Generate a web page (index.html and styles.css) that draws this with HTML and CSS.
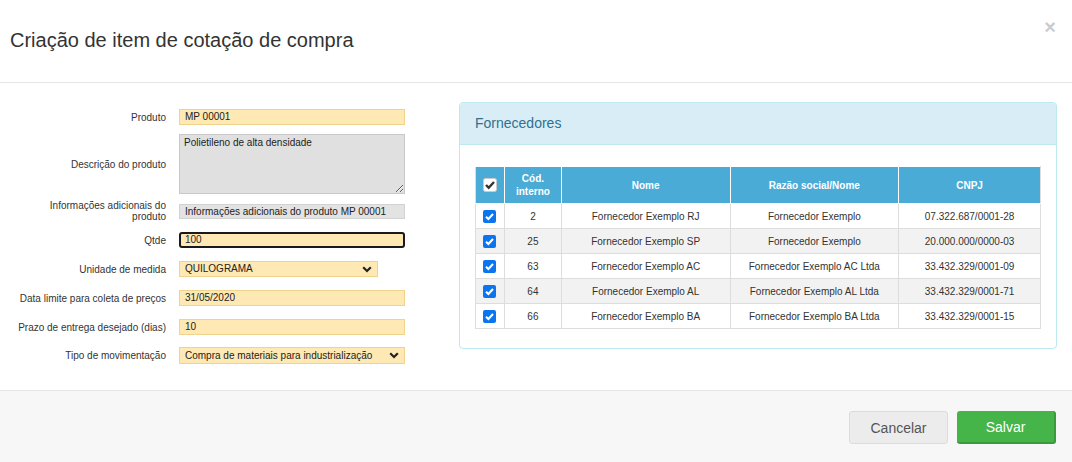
FILE: index.html
```html
<!DOCTYPE html>
<html lang="pt">
<head>
<meta charset="utf-8">
<title>Criação de item de cotação de compra</title>
<link rel="stylesheet" href="styles.css">
</head>
<body>
<div class="modal">
  <div class="modal-header">
    <h4 class="modal-title">Criação de item de cotação de compra</h4>
    <span class="close">×</span>
  </div>
  <div class="modal-body">
    <div class="form">
      <div class="row r1">
        <label>Produto</label>
        <div class="field yellow">MP 00001</div>
      </div>
      <div class="row r2">
        <label>Descrição do produto</label>
        <textarea class="area" readonly>Polietileno de alta densidade</textarea>
      </div>
      <div class="row r3">
        <label class="wrap">Informações adicionais do produto</label>
        <div class="field gray">Informações adicionais do produto MP 00001</div>
      </div>
      <div class="row r4">
        <label>Qtde</label>
        <div class="field yellow focus">100</div>
      </div>
      <div class="row r5">
        <label>Unidade de medida</label>
        <div class="field yellow select short"><span>QUILOGRAMA</span>
          <svg class="chev" viewBox="0 0 10 7" width="10" height="7"><path d="M1.2 1.2 L5 5 L8.8 1.2" fill="none" stroke="#222" stroke-width="2.2"/></svg>
        </div>
      </div>
      <div class="row r6">
        <label>Data limite para coleta de preços</label>
        <div class="field yellow">31/05/2020</div>
      </div>
      <div class="row r7">
        <label>Prazo de entrega desejado (dias)</label>
        <div class="field yellow">10</div>
      </div>
      <div class="row r8">
        <label>Tipo de movimentação</label>
        <div class="field yellow select tall"><span>Compra de materiais para industrialização</span>
          <svg class="chev" viewBox="0 0 10 7" width="10" height="7"><path d="M1.2 1.2 L5 5 L8.8 1.2" fill="none" stroke="#222" stroke-width="2.2"/></svg>
        </div>
      </div>
    </div>
    <div class="panel">
      <div class="panel-heading">Fornecedores</div>
      <div class="panel-body">
        <table class="grid">
          <thead>
            <tr>
              <th class="c-chk"><svg viewBox="0 0 14 14" width="14" height="14"><rect x="0.5" y="0.5" width="13" height="13" rx="2" fill="#fff" stroke="#ccc"/><path d="M3 7 L5.7 9.7 L11 4" fill="none" stroke="#333" stroke-width="2.4"/></svg></th>
              <th class="c-cod">Cód.<br>interno</th>
              <th class="c-nome">Nome</th>
              <th class="c-raz">Razão social/Nome</th>
              <th class="c-cnpj">CNPJ</th>
            </tr>
          </thead>
          <tbody>
            <tr><td class="c-chk"><svg viewBox="0 0 13 13" width="13" height="13"><rect width="13" height="13" rx="2" fill="#0b74f0"/><path d="M3 6.7 L5.4 9 L10 4" fill="none" stroke="#fff" stroke-width="2"/></svg></td><td>2</td><td>Fornecedor Exemplo RJ</td><td>Fornecedor Exemplo</td><td>07.322.687/0001-28</td></tr>
            <tr><td class="c-chk"><svg viewBox="0 0 13 13" width="13" height="13"><rect width="13" height="13" rx="2" fill="#0b74f0"/><path d="M3 6.7 L5.4 9 L10 4" fill="none" stroke="#fff" stroke-width="2"/></svg></td><td>25</td><td>Fornecedor Exemplo SP</td><td>Fornecedor Exemplo</td><td>20.000.000/0000-03</td></tr>
            <tr><td class="c-chk"><svg viewBox="0 0 13 13" width="13" height="13"><rect width="13" height="13" rx="2" fill="#0b74f0"/><path d="M3 6.7 L5.4 9 L10 4" fill="none" stroke="#fff" stroke-width="2"/></svg></td><td>63</td><td>Fornecedor Exemplo AC</td><td>Fornecedor Exemplo AC Ltda</td><td>33.432.329/0001-09</td></tr>
            <tr><td class="c-chk"><svg viewBox="0 0 13 13" width="13" height="13"><rect width="13" height="13" rx="2" fill="#0b74f0"/><path d="M3 6.7 L5.4 9 L10 4" fill="none" stroke="#fff" stroke-width="2"/></svg></td><td>64</td><td>Fornecedor Exemplo AL</td><td>Fornecedor Exemplo AL Ltda</td><td>33.432.329/0001-71</td></tr>
            <tr><td class="c-chk"><svg viewBox="0 0 13 13" width="13" height="13"><rect width="13" height="13" rx="2" fill="#0b74f0"/><path d="M3 6.7 L5.4 9 L10 4" fill="none" stroke="#fff" stroke-width="2"/></svg></td><td>66</td><td>Fornecedor Exemplo BA</td><td>Fornecedor Exemplo BA Ltda</td><td>33.432.329/0001-15</td></tr>
          </tbody>
        </table>
      </div>
    </div>
  </div>
  <div class="modal-footer">
    <button class="btn btn-default">Cancelar</button>
    <button class="btn btn-success">Salvar</button>
  </div>
</div>
</body>
</html>
```
FILE: styles.css
```css
* { box-sizing: border-box; }
html, body { margin: 0; padding: 0; background: #fff; }
body { font-family: "Liberation Sans", Arial, sans-serif; color: #333; width: 1072px; height: 462px; overflow: hidden; }

.modal { display: flex; flex-direction: column; height: 462px; }

.modal-header {
  height: 83px;
  border-bottom: 1px solid #e5e5e5;
  display: flex;
  align-items: center;
  justify-content: space-between;
  padding: 0 16px 0 10px;
}
.modal-title { margin: 0; font-size: 20px; font-weight: normal; color: #333; line-height: 1; padding-bottom: 2px; }
.close { font-size: 20px; font-weight: bold; color: #000; opacity: .2; line-height: 1; align-self: flex-start; margin-top: 17px; }

.modal-body { flex: 1; display: flex; padding: 19px 15px 0 0; }

.form { width: 459px; padding-top: 7px; display: flex; flex-direction: column; }
.row { display: grid; grid-template-columns: 166px 226px; column-gap: 13px; align-items: center; }
.row label { text-align: right; font-size: 10px; line-height: 11px; color: #333; }
.row label.wrap { padding-left: 40px; }
.r1 { height: 16px; margin-bottom: 9px; }
.r2 { height: 60px; margin-bottom: 6px; }
.r3 { height: 22px; margin-bottom: 10px; }
.r4, .r5, .r6 { height: 16px; margin-bottom: 13px; }
.r7 { height: 16px; margin-bottom: 12px; }
.r8 { height: 17px; }

.field {
  height: 16px;
  font-size: 10px;
  line-height: 14px;
  padding: 0 5px;
  border: 1px solid #f0d48e;
  color: #222;
  white-space: nowrap;
}
.yellow { background: #fee8b4; }
.gray { background: #e3e3e3; border-color: #d2d2d2; height: 15px; line-height: 13px; }
.focus { border: 2px solid #1a1a1a; border-radius: 3px; line-height: 12px; padding-left: 4px; }
.select { display: flex; align-items: center; justify-content: space-between; padding-right: 5px; }
.short { width: 199px; }
.tall { height: 17px; }
.chev { display: block; }

.area {
  display: block;
  width: 226px;
  height: 60px;
  margin: 0;
  resize: vertical;
  background: #e0e0e0;
  border: 1px solid #c9c9c9;
  font-family: "Liberation Sans", Arial, sans-serif;
  font-size: 10px;
  line-height: 12px;
  padding: 2px 4px;
  color: #222;
}

.panel {
  width: 598px;
  height: 247px;
  border: 1px solid #bce8f1;
  border-radius: 4px;
  display: flex;
  flex-direction: column;
}
.panel-heading {
  height: 42px;
  background: #d9edf7;
  border-bottom: 1px solid #bce8f1;
  color: #31708f;
  font-size: 14px;
  line-height: 40px;
  padding-left: 15px;
  border-radius: 3px 3px 0 0;
}
.panel-body { padding: 21px 15px 0 15px; }

.grid { border-collapse: collapse; width: 566px; font-size: 10px; text-align: center; color: #333; }
.grid th {
  background: #4aabd6;
  color: #fff;
  font-weight: bold;
  height: 37px;
  border: 1px solid #fff;
  line-height: 13px;
  padding: 0;
}
.grid thead tr th:first-child { border-left-color: #ddd; }
.grid thead tr th:last-child { border-right-color: #ddd; }
.grid td { border: 1px solid #ddd; height: 25px; padding: 0; }
.grid tbody tr:nth-child(even) td { background: #f2f2f2; }
.c-chk { width: 29px; }
.c-chk svg { display: block; margin: 0 auto; }
.c-cod { width: 57px; }
.c-nome { width: 169px; }
.c-raz { width: 169px; }
.c-cnpj { width: 142px; }

.modal-footer {
  height: 72px;
  border-top: 1px solid #e5e5e5;
  background: #f7f7f7;
  display: flex;
  justify-content: flex-end;
  align-items: flex-start;
  padding: 20px 16px 0 0;
  gap: 9px;
}
.btn {
  width: 99px;
  height: 33px;
  font-family: "Liberation Sans", Arial, sans-serif;
  font-size: 14px;
  border-radius: 3px;
  cursor: pointer;
}
.btn-default { background: #ececec; border: 1px solid #dcdcdc; color: #555; }
.btn-success { background: #45b449; border: 1px solid #3a9a3d; border-width: 0 2px 2px 0; color: #fff; }
```
